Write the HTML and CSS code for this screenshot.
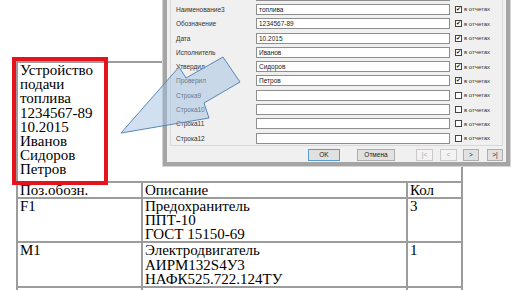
FILE: index.html
```html
<!DOCTYPE html>
<html lang="ru">

<head>
    <meta charset="UTF-8">
    <meta name="viewport" content="width=device-width, initial-scale=1.0">
    <title>Основная надпись и перечень элементов</title>
    <link rel="stylesheet" href="styles.css">
</head>

<body>
    <div id="page">
        <table class="doc">
            <colgroup>
                <col class="cPos">
                <col class="cDesc">
                <col class="cQty">
            </colgroup>
            <tr>
                <td colspan="3" class="title">Устройство<br>подачи<br>топлива<br>1234567-89<br>10.2015<br>Иванов<br>Сидоров<br>Петров</td>
            </tr>
            <tr>
                <td>Поз.обозн.</td>
                <td>Описание</td>
                <td>Кол</td>
            </tr>
            <tr>
                <td>F1</td>
                <td>Предохранитель<br>ППТ-10<br>ГОСТ 15150-69</td>
                <td>3</td>
            </tr>
            <tr>
                <td>M1</td>
                <td>Электродвигатель<br>АИРМ132S4У3<br>НАФК525.722.124ТУ</td>
                <td>1</td>
            </tr>
            <tr>
                <td>Q1</td>
                <td>Выключатель автоматический</td>
                <td>1</td>
            </tr>
        </table>

        <!-- рамка выделения -->
        <div class="mark"></div>

        <div id="dialog">
            <div class="group">
                <div class="row"><span class="lbl">Наименование1</span><span class="field">Устройство</span><span class="cb on"></span><span class="rep">в отчетах</span></div>
                <div class="row"><span class="lbl">Наименование2</span><span class="field">подачи</span><span class="cb on"></span><span class="rep">в отчетах</span></div>
                <div class="row"><span class="lbl">Наименование3</span><span class="field">топлива</span><span class="cb on"></span><span class="rep">в отчетах</span></div>
                <div class="row"><span class="lbl">Обозначение</span><span class="field">1234567-89</span><span class="cb on"></span><span class="rep">в отчетах</span></div>
                <div class="row"><span class="lbl">Дата</span><span class="field">10.2015</span><span class="cb on"></span><span class="rep">в отчетах</span></div>
                <div class="row"><span class="lbl">Исполнитель</span><span class="field">Иванов</span><span class="cb on"></span><span class="rep">в отчетах</span></div>
                <div class="row"><span class="lbl">Утвердил</span><span class="field">Сидоров</span><span class="cb on"></span><span class="rep">в отчетах</span></div>
                <div class="row"><span class="lbl">Проверил</span><span class="field">Петров</span><span class="cb on"></span><span class="rep">в отчетах</span></div>
                <div class="row"><span class="lbl">Строка9</span><span class="field"></span><span class="cb"></span><span class="rep">в отчетах</span></div>
                <div class="row"><span class="lbl">Строка10</span><span class="field"></span><span class="cb"></span><span class="rep">в отчетах</span></div>
                <div class="row"><span class="lbl">Строка11</span><span class="field"></span><span class="cb"></span><span class="rep">в отчетах</span></div>
                <div class="row"><span class="lbl">Строка12</span><span class="field"></span><span class="cb"></span><span class="rep">в отчетах</span></div>
            </div>
            <div class="buttons">
                <button class="ok">OK</button>
                <button class="cancel">Отмена</button>
                <button class="nav first" disabled>|&lt;</button>
                <button class="nav prev" disabled>&lt;</button>
                <button class="nav next">&gt;</button>
                <button class="nav last">&gt;|</button>
            </div>
        </div>

        <!-- выноска -->
        <svg class="callout" width="516" height="290" viewBox="0 0 516 290">
            <polygon points="121,133 179,67 186,78 223,57 240,82 204,103 209,118" />
        </svg>
    </div>
</body>

</html>
```

FILE: styles.css
```css
body {
    margin: 0;
    background: #ffffff;
}

#page {
    position: relative;
    width: 516px;
    height: 290px;
    overflow: hidden;
}

/* документ */
.doc {
    margin: 61px 0 0 16px;
    width: 447px;
    table-layout: fixed;
    border-collapse: collapse;
    font-family: "Liberation Serif", "Times New Roman", serif;
    font-size: 15px;
    line-height: 14.2px;
    color: #000000;
}

.cPos {
    width: 125px;
}

.cDesc {
    width: 265px;
}

.cQty {
    width: 55px;
}

.doc td {
    border: 2px solid #9c9c9c;
    padding: 0 2px;
    vertical-align: top;
    white-space: nowrap;
    overflow: hidden;
}

.doc td.title {
    padding-bottom: 4px;
}

.mark {
    position: absolute;
    left: 12px;
    top: 57px;
    width: 96px;
    height: 128px;
    box-sizing: border-box;
    border: 4px solid #e5141c;
}

/* окно */
#dialog {
    position: absolute;
    left: 163px;
    top: -32px;
    width: 347px;
    box-sizing: border-box;
    border: 4px solid #a5a5a5;
    box-shadow: 0 0 0 1px #d4d4d4;
    background: #f0f0f0;
    padding: 0 3px 1px 3px;
    font-family: "Liberation Sans", "DejaVu Sans", sans-serif;
    font-size: 6.5px;
    color: #333333;
}

.group {
    display: grid;
    row-gap: 3.3px;
    border: 1px solid #d9d9d9;
    border-top: 0;
    padding: 3.4px 0 1.3px 5px;
}

.row {
    display: grid;
    grid-template-columns: 80px 194px 12px 1fr;
    height: 11px;
    align-items: center;
}

.field {
    height: 11px;
    box-sizing: border-box;
    border: 1px solid #8e8e8e;
    background: #ffffff;
    padding-left: 2px;
    line-height: 9px;
    color: #222222;
}

.cb {
    justify-self: end;
    width: 7px;
    height: 7px;
    box-sizing: border-box;
    border: 1px solid #444444;
    background: #ffffff;
    position: relative;
}

.cb.on:after {
    content: "✔";
    position: absolute;
    left: 0;
    top: -2px;
    font-family: "DejaVu Sans", sans-serif;
    font-size: 6px;
    line-height: 8px;
    color: #111111;
}

.rep {
    padding-left: 2px;
    font-size: 6px;
    white-space: nowrap;
}

.buttons {
    display: flex;
    justify-content: flex-end;
    margin-top: 3px;
    height: 12px;
}

.buttons button {
    height: 12px;
    padding: 0;
    margin: 0;
    border: 1px solid #adadad;
    background: #e1e1e1;
    font-family: "Liberation Sans", "DejaVu Sans", sans-serif;
    font-size: 6.5px;
    line-height: 10px;
    color: #222222;
}

.buttons .ok {
    width: 32px;
    border-color: #5a9ad8;
}

.buttons .cancel {
    width: 38px;
    margin-left: 17px;
}

.buttons .nav {
    width: 17px;
}

.buttons .first {
    margin-left: 21px;
}

.buttons .prev {
    margin-left: 7px;
}

.buttons .next {
    width: 16px;
    margin-left: 6px;
}

.buttons .last {
    width: 16px;
    margin-left: 8px;
}

.buttons .nav:disabled {
    border-color: #c9c9c9;
    background: #f3f3f3;
    color: #a8a8a8;
}

.callout {
    position: absolute;
    left: 0;
    top: 0;
}

.callout polygon {
    fill: #9fbfe0;
    fill-opacity: 0.48;
    stroke: #5a86b4;
    stroke-width: 1;
}
```
